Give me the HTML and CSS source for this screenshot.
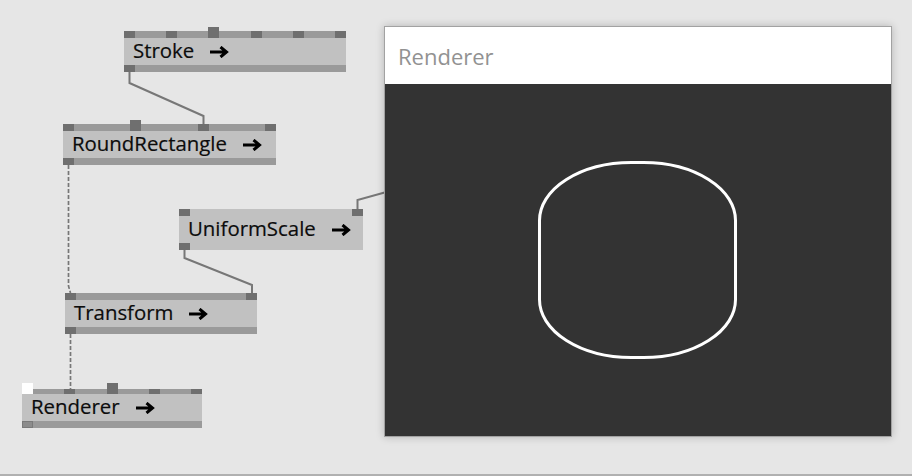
FILE: index.html
```html
<!DOCTYPE html>
<html lang="en">
<head>
<meta charset="utf-8">
<title>Patch</title>
<link rel="stylesheet" href="styles.css">
</head>
<body>
<main class="canvas">
  <svg class="links" width="912" height="474" viewBox="0 0 912 474">
    <polyline class="link" points="129.5,72 129.5,83 203.5,116 203.5,124"/>
    <polyline class="link dashed" points="68.5,165 68.5,286 70.5,293"/>
    <polyline class="link dashed" points="70.5,334 70.5,389"/>
    <polyline class="link" points="184.5,249 184.5,258 252,285 252,293"/>
    <polyline class="link" points="357.5,209 357.5,200 390,191"/>
  </svg>

  <div class="node n-stroke">
    <div class="bar top">
      <span class="pin"></span><span class="pin"></span><span class="pin tall"></span><span class="pin"></span><span class="pin"></span><span class="pin"></span>
    </div>
    <div class="body"><span class="label">Stroke</span><svg class="arrow" width="19" height="12" viewBox="0 0 19 12"><path d="M0 6H16.5M10.5 1L16.5 6L10.5 11"/></svg></div>
    <div class="bar bottom"><span class="pin"></span></div>
  </div>

  <div class="node n-round">
    <div class="bar top">
      <span class="pin"></span><span class="pin tall"></span><span class="pin"></span><span class="pin"></span>
    </div>
    <div class="body"><span class="label">RoundRectangle</span><svg class="arrow" width="19" height="12" viewBox="0 0 19 12"><path d="M0 6H16.5M10.5 1L16.5 6L10.5 11"/></svg></div>
    <div class="bar bottom"><span class="pin"></span></div>
  </div>

  <div class="node flat n-scale">
    <div class="bar top">
      <span class="pin"></span><span class="pin"></span>
    </div>
    <div class="body"><span class="label">UniformScale</span><svg class="arrow" width="19" height="12" viewBox="0 0 19 12"><path d="M0 6H16.5M10.5 1L16.5 6L10.5 11"/></svg></div>
    <div class="bar bottom"><span class="pin"></span></div>
  </div>

  <div class="node n-transform">
    <div class="bar top">
      <span class="pin"></span><span class="pin"></span>
    </div>
    <div class="body"><span class="label">Transform</span><svg class="arrow" width="19" height="12" viewBox="0 0 19 12"><path d="M0 6H16.5M10.5 1L16.5 6L10.5 11"/></svg></div>
    <div class="bar bottom"><span class="pin"></span></div>
  </div>

  <div class="node n-renderer">
    <div class="bar top thin">
      <span class="pin tall white"></span><span class="pin"></span><span class="pin tall"></span><span class="pin"></span><span class="pin"></span>
    </div>
    <div class="body"><span class="label">Renderer</span><svg class="arrow" width="19" height="12" viewBox="0 0 19 12"><path d="M0 6H16.5M10.5 1L16.5 6L10.5 11"/></svg></div>
    <div class="bar bottom"><span class="pin hover"></span></div>
  </div>

  <section class="window">
    <header class="window-title">Renderer</header>
    <div class="window-view">
      <svg class="scene" width="506" height="351" viewBox="0 0 506 351">
        <rect x="154.5" y="78.5" width="196" height="195" rx="92" ry="58"/>
      </svg>
    </div>
  </section>
</main>
<div class="statusline"></div>
</body>
</html>
```

FILE: styles.css
```css
* { box-sizing: border-box; }

html, body {
  margin: 0;
  padding: 0;
  width: 912px;
  height: 476px;
  overflow: hidden;
}

body {
  display: flex;
  flex-direction: column;
  background: #e6e6e6;
  font-family: "Open Sans", "Noto Sans", sans-serif;
}

.canvas {
  position: relative;
  flex: 1;
}

.statusline {
  height: 2px;
  background: #b0b0b0;
}

.links {
  position: absolute;
  left: 0;
  top: 0;
}

.link {
  fill: none;
  stroke: #777777;
  stroke-width: 2;
}

.link.dashed {
  stroke-dasharray: 4 2;
  stroke-width: 1.7;
}

/* nodes */
.node {
  position: absolute;
  display: flex;
  flex-direction: column;
  background: #c1c1c1;
}

.bar {
  height: 7px;
  display: flex;
  justify-content: space-between;
  align-items: flex-end;
  background: #9a9a9a;
}

.bar.thin { height: 5px; }

.bar.bottom { align-items: flex-start; }

.pin {
  width: 11px;
  height: 7px;
  flex: none;
  background: #6f6f6f;
}

.bar.thin .pin { height: 5px; }

.pin.tall,
.bar.thin .pin.tall {
  height: 11px;
}

.pin.white { background: #ffffff; }

.pin.hover {
  background: #8c8c8c;
  border: 1px solid #7a7a7a;
}

.body {
  height: 27px;
  display: flex;
  align-items: center;
  gap: 16px;
  padding: 0 0 2px 9px;
}

.label {
  font-size: 20.4px;
  line-height: 1;
  color: #0c0c0c;
  white-space: nowrap;
  -webkit-text-stroke: 0.2px #0c0c0c;
}

.arrow {
  flex: none;
  margin-top: 2px;
}

.arrow path {
  fill: none;
  stroke: #000000;
  stroke-width: 3;
}

.node.flat .bar { background: transparent; }
.node.flat .bar.top { align-items: flex-start; }

.n-stroke { left: 124px; top: 31px; width: 222px; }
.n-round { left: 63px; top: 124px; width: 213px; }
.n-scale { left: 179px; top: 209px; width: 184px; }
.n-transform { left: 65px; top: 293px; width: 192px; }
.n-renderer { left: 22px; top: 389px; width: 180px; }

/* renderer window */
.window {
  position: absolute;
  left: 384px;
  top: 26px;
  width: 508px;
  height: 411px;
  display: flex;
  flex-direction: column;
  border: 1px solid #a2a2a2;
  box-shadow: 0 0 8px rgba(0, 0, 0, 0.22);
  background: #ffffff;
}

.window-title {
  height: 57px;
  display: flex;
  align-items: center;
  padding-left: 13px;
  font-size: 22px;
  color: #929292;
  background: #ffffff;
}

.window-view {
  flex: 1;
  background: #333333;
}

.scene {
  display: block;
}

.scene rect {
  fill: none;
  stroke: #ffffff;
  stroke-width: 3;
}
```
